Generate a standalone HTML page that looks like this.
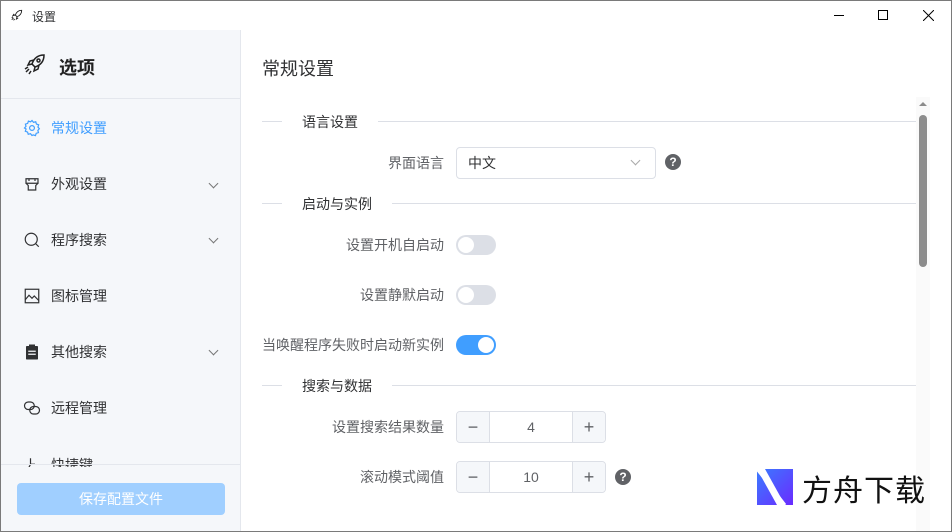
<!DOCTYPE html>
<html><head><meta charset="utf-8">
<style>
*{box-sizing:border-box;margin:0;padding:0}
body{width:952px;height:532px;overflow:hidden;background:#fff;font-family:"Liberation Sans","Noto Sans CJK SC",sans-serif;position:relative;color:#303133}
.win{position:absolute;left:0;top:0;width:952px;height:532px;border:1px solid #7a7a7a}
.title{position:absolute;left:1px;top:1px;width:950px;height:29px;background:#fff;font-size:12px}
.side{position:absolute;left:1px;top:30px;width:240px;height:501px;background:#f5f7fa;border-right:1px solid #e4e7ed}
.abs{position:absolute}
.item{position:absolute;left:22px;font-size:14px;color:#303133;display:flex;align-items:center;height:20px}
.item svg{margin-right:10px}
.chev{position:absolute;left:209px;width:7px;height:7px;border-right:1px solid #777;border-bottom:1px solid #777;transform:rotate(45deg)}
.sec{position:absolute;left:262px;width:654px;height:1px;background:#dcdfe6}
.sect{position:absolute;left:282px;background:#fff;padding:0 20px;font-size:14px;color:#303133;line-height:16px}
.lab{position:absolute;right:508px;font-size:14px;color:#606266;line-height:16px;text-align:right;white-space:nowrap}
.sw{position:absolute;left:456px;width:40px;height:20px;border-radius:10px;background:#dcdfe6}
.sw::after{content:"";position:absolute;left:2px;top:2px;width:16px;height:16px;border-radius:50%;background:#fff}
.sw.on{background:#409eff}.sw.on::after{left:22px}
.num{position:absolute;left:456px;width:150px;height:32px;border:1px solid #dcdfe6;border-radius:4px;background:#fff;font-size:14px;color:#606266}
.num .b{position:absolute;top:0;width:33px;height:30px;background:#f5f7fa;text-align:center;line-height:30px;font-size:18px;color:#606266}
.num .l{left:0;border-right:1px solid #dcdfe6;border-radius:4px 0 0 4px}
.num .r{right:0;border-left:1px solid #dcdfe6;border-radius:0 4px 4px 0}
.num .v{position:absolute;left:33px;right:33px;top:0;line-height:30px;text-align:center}
.help{position:absolute;width:16px;height:16px;border-radius:50%;background:#606266;color:#fff;font-size:12px;font-weight:bold;text-align:center;line-height:16px}
</style></head><body>
<div class="win"></div>
<div class="title">
  <svg class="abs" style="left:9px;top:7px" width="14" height="14" viewBox="0 0 24 24" fill="none" stroke="#222" stroke-width="1.6"><path d="M20 4c-5 0-9 3-11 8l3 3c5-2 8-6 8-11z"/><path d="M9 12l-4 1 2-3M12 15l-1 4 3-2"/><path d="M6 17l-3 3M8 19l-2 2M5 15l-2 2"/></svg>
  <span class="abs" style="left:31px;top:7px">设置</span>
  <div class="abs" style="left:833px;top:14px;width:10px;height:1px;background:#000"></div>
  <div class="abs" style="left:877px;top:9px;width:10px;height:10px;border:1px solid #000"></div>
  <svg class="abs" style="left:922px;top:9px" width="11" height="11" viewBox="0 0 11 11" stroke="#000" stroke-width="1"><path d="M0 0L11 11M11 0L0 11"/></svg>
</div>
<div class="side">
  <svg class="abs" style="left:22px;top:22px" width="24" height="24" viewBox="0 0 24 24" fill="none" stroke="#222" stroke-width="1.5"><path d="M21 3c-6 0-10 3-12 9l3 3c6-2 9-6 9-12z"/><circle cx="15.5" cy="8.5" r="1.5"/><path d="M9 12l-4 1 2-4 4-1M12 15l-1 4 4-2 1-4"/><path d="M6 17l-3 3M8 19l-2 3M5 15l-3 2"/></svg>
  <div class="abs" style="left:58px;top:24px;font-size:18px;font-weight:bold;color:#222">选项</div>
  <div class="abs" style="left:0;top:68px;width:240px;height:1px;background:#e4e7ed"></div>
  <div class="item" style="top:88px;color:#409eff"><svg width="18" height="18" viewBox="0 0 24 24" fill="none" stroke="#409eff" stroke-width="1.6"><circle cx="12" cy="12" r="3.2"/><path d="M12 2l2 2.5 3-.8.9 3 3 1-1 3 1.9 2.3-2 2.2.8 3-3 .9-1 3-3-.9L12 22l-2-2.4-3 .8-.9-3-3-1 1-3L2 12l2-2.2-.8-3 3-.9 1-3 3 .9z"/></svg>常规设置</div>
  <div class="item" style="top:144px"><svg width="18" height="18" viewBox="0 0 24 24" fill="none" stroke="#303133" stroke-width="1.6"><path d="M4 5h16v6H4zM4 11l3 3v6h10v-6l3-3M8 5v3M16 5v3"/></svg>外观设置</div>
  <div class="chev" style="top:150px"></div>
  <div class="item" style="top:200px"><svg width="18" height="18" viewBox="0 0 24 24" fill="none" stroke="#303133" stroke-width="1.6"><circle cx="11" cy="11" r="8"/><path d="M17 17l4 4"/></svg>程序搜索</div>
  <div class="chev" style="top:205px"></div>
  <div class="item" style="top:256px"><svg width="18" height="18" viewBox="0 0 24 24" fill="none" stroke="#303133" stroke-width="1.6"><rect x="3" y="3" width="18" height="18"/><path d="M3 17l5-6 4 4 3-3 6 6"/></svg>图标管理</div>
  <div class="item" style="top:312px"><svg width="18" height="18" viewBox="0 0 24 24"><rect x="4" y="4" width="16" height="18" rx="1" fill="#303133"/><rect x="8" y="2" width="8" height="4" fill="#303133"/><path d="M7 11h10M7 15h10" stroke="#f5f7fa" stroke-width="1.6"/></svg>其他搜索</div>
  <div class="chev" style="top:317px"></div>
  <div class="item" style="top:368px"><svg width="18" height="18" viewBox="0 0 24 24" fill="none" stroke="#303133" stroke-width="1.6"><rect x="2" y="4" width="13" height="10" rx="5"/><rect x="9" y="10" width="13" height="10" rx="5"/></svg>远程管理</div>
  <div class="abs" style="left:0;top:423px;width:240px;height:14px;overflow:hidden"><div class="item" style="top:2px"><svg width="18" height="18" viewBox="0 0 24 24" fill="none" stroke="#303133" stroke-width="1.6"><path d="M10 3v8l-5 10M10 11h6"/></svg>快捷键</div></div>
  <div class="abs" style="left:0;top:434px;width:240px;height:1px;background:#e4e7ed"></div>
  <div class="abs" style="left:16px;top:453px;width:208px;height:32px;border-radius:4px;background:#a0cfff;color:#fff;font-size:14px;text-align:center;line-height:32px">保存配置文件</div>
</div>
<div class="abs" style="left:262px;top:55px;font-size:18px;color:#303133">常规设置</div>
<div class="sec" style="top:121px"></div><div class="sect" style="top:114px">语言设置</div>
<div class="lab" style="top:155px">界面语言</div>
<div class="abs" style="left:456px;top:147px;width:200px;height:32px;border:1px solid #dcdfe6;border-radius:4px;font-size:14px;line-height:30px;padding-left:11px;color:#303133">中文</div>
<div class="abs" style="left:632px;top:157px;width:7px;height:7px;border-right:1px solid #aaa;border-bottom:1px solid #aaa;transform:rotate(45deg)"></div>
<div class="help" style="left:665px;top:154px">?</div>
<div class="sec" style="top:203px"></div><div class="sect" style="top:196px">启动与实例</div>
<div class="lab" style="top:237px">设置开机自启动</div><div class="sw" style="top:235px"></div>
<div class="lab" style="top:287px">设置静默启动</div><div class="sw" style="top:285px"></div>
<div class="lab" style="top:337px">当唤醒程序失败时启动新实例</div><div class="sw on" style="top:335px"></div>
<div class="sec" style="top:385px"></div><div class="sect" style="top:378px">搜索与数据</div>
<div class="lab" style="top:419px">设置搜索结果数量</div>
<div class="num" style="top:411px"><div class="b l">−</div><div class="v">4</div><div class="b r">+</div></div>
<div class="lab" style="top:469px">滚动模式阈值</div>
<div class="num" style="top:461px"><div class="b l">−</div><div class="v">10</div><div class="b r">+</div></div>
<div class="help" style="left:615px;top:469px">?</div>
<div class="abs" style="left:916px;top:97px;width:14px;height:434px;background:#fafafa"></div>
<div class="abs" style="left:919px;top:102px;width:0;height:0;border-left:4px solid transparent;border-right:4px solid transparent;border-bottom:4px solid #8c8c8c"></div>
<div class="abs" style="left:919px;top:115px;width:8px;height:152px;border-radius:4px;background:#8c8c8c"></div>
<div class="abs" style="left:757px;top:469px;width:36px;height:36px;background:linear-gradient(135deg,#3a7bff,#6a2bff)"></div>
<svg class="abs" style="left:757px;top:469px" width="36" height="36"><path d="M0 0h8l20 36h-8z" fill="#fff"/><path d="M0 0l28 36" stroke="#fff" stroke-width="3"/></svg>
<div class="abs" style="left:802px;top:470px;font-size:30px;color:#111;letter-spacing:1px;font-family:'Noto Sans CJK SC',sans-serif;line-height:36px">方舟下载</div>
</body></html>
